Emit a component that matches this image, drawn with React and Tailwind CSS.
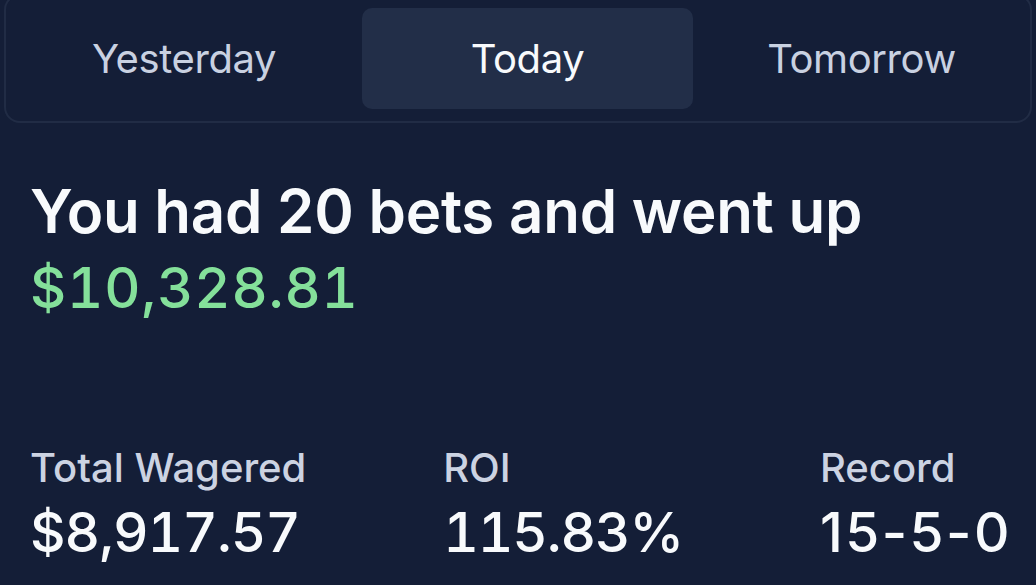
import React, { useState } from 'react';

const tabs = ['Yesterday', 'Today', 'Tomorrow'];

const stats = [
  { label: 'Total Wagered', value: '$8,917.57', valueClass: 'tabular-nums tracking-[-0.018em]' },
  { label: 'ROI', value: '115.83%', valueClass: 'tabular-nums tracking-[-0.02em]' },
  { label: 'Record', value: '15-5-0', valueClass: 'tracking-[0.045em]' },
];

export default function App() {
  const [active, setActive] = useState('Today');

  return (
    <div
      className="w-[1036px] h-[585px] overflow-hidden bg-[#141e37] text-white"
      style={{ fontFamily: 'Inter, "Noto Sans", sans-serif' }}
    >
      {/* Day switcher */}
      <div className="mx-[4px] mt-[-6px] grid grid-cols-[342px_331px_1fr] gap-[7px] rounded-[16px] border-2 border-[#212c45] px-[7px] py-[12px]">
        {tabs.map((tab) => {
          const isActive = tab === active;
          return (
            <button
              key={tab}
              onClick={() => setActive(tab)}
              className={`h-[101px] rounded-[10px] text-[40px] leading-none font-normal tracking-[-0.01em] ${
                isActive ? 'bg-[#222e48] text-[#f8fafc]' : 'text-[#c9d1e1]'
              }`}
            >
              {tab}
            </button>
          );
        })}
      </div>

      {/* Summary */}
      <div className="px-[30px] pt-[58px]">
        <h1 className="text-[60px] leading-[60px] font-semibold tracking-[-0.004em] text-[#f8fafc]">
          You had 20 bets and went up
        </h1>
        <div className="mt-[19px] text-[56px] leading-[56px] font-medium tabular-nums tracking-[0.015em] text-[#84e09a]">
          $10,328.81
        </div>
      </div>

      {/* Stats */}
      <div className="mt-[132px] flex justify-between pl-[30px] pr-[24px]">
        {stats.map((s) => (
          <div key={s.label} className="flex flex-col gap-[17px]">
            <span className="text-[40px] leading-[40px] font-medium text-[#ccd3e2]">
              {s.label}
            </span>
            <span className={`text-[55px] leading-[55px] font-medium text-[#f8fafc] ${s.valueClass}`}>
              {s.value}
            </span>
          </div>
        ))}
      </div>
    </div>
  );
}
